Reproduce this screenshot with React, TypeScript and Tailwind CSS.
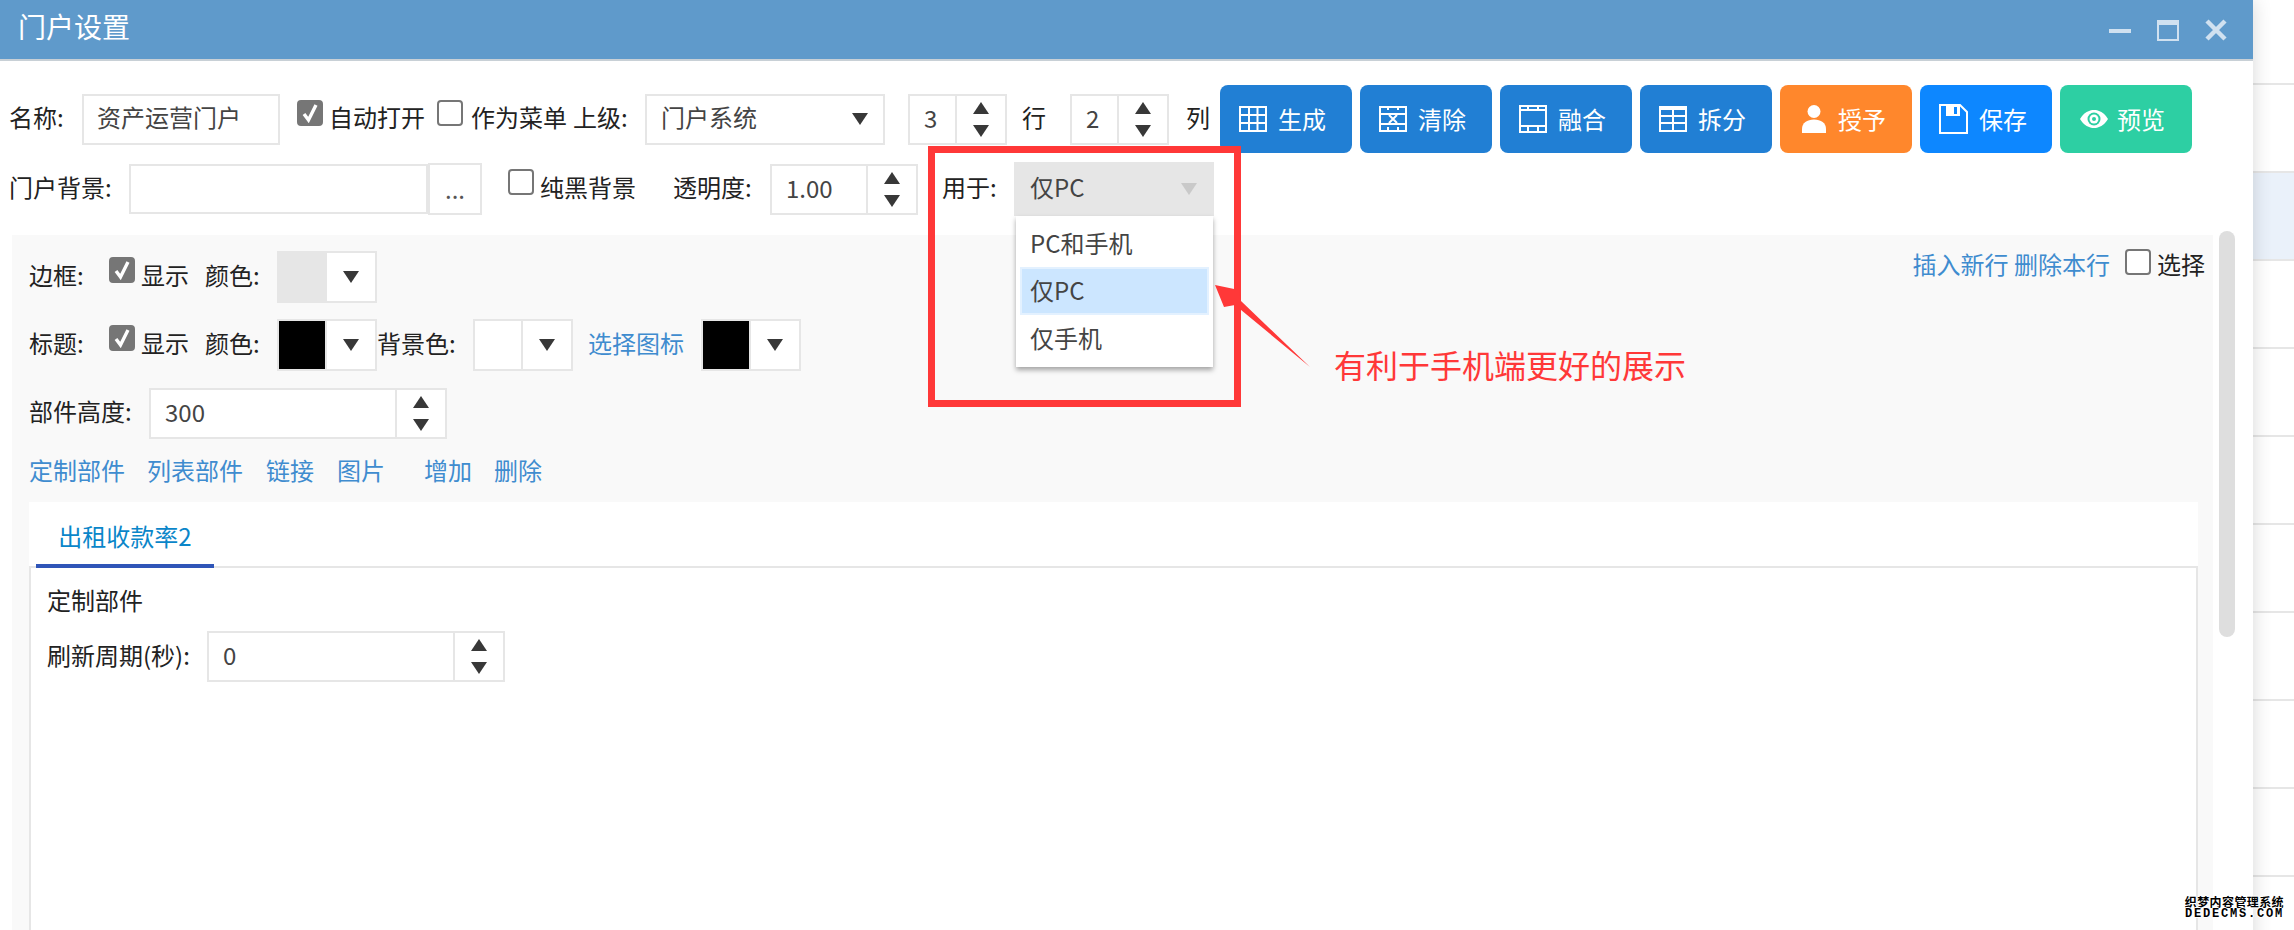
import type { ReactNode } from 'react';

const asideRows = [false, true, false, false, false, false, false, false, false, false];

function Triangle({ down, muted }: { down?: boolean; muted?: boolean }) {
  return (
    <svg width="16" height="12" viewBox="0 0 16 12" className="block shrink-0">
      <polygon
        points={down ? '0,0 16,0 8,12' : '8,0 16,12 0,12'}
        fill={muted ? '#c9c9c9' : '#383838'}
      />
    </svg>
  );
}

function Check({ checked }: { checked?: boolean }) {
  return (
    <div
      className={`flex h-[26px] w-[26px] shrink-0 items-center justify-center rounded-[4px] border-2 ${
        checked ? 'border-[#767676] bg-[#767676]' : 'border-[#767676] bg-white'
      }`}
    >
      {checked && (
        <svg width="18" height="20" viewBox="0 0 18 20">
          <path d="M3 11 L7.500 17 L15 2" fill="none" stroke="#fff" strokeWidth="3.400" />
        </svg>
      )}
    </div>
  );
}

function Spinner({ width, value }: { width: string; value: string }) {
  return (
    <div className={`flex h-[51px] shrink-0 border-2 border-[#e6e6e6] bg-white ${width}`}>
      <div className="flex min-w-0 flex-1 items-center pb-[3px] pl-[14px] text-[#444]">{value}</div>
      <div className="flex w-[50px] shrink-0 flex-col items-center justify-center gap-[11px] border-l-2 border-[#e6e6e6]">
        <Triangle />
        <Triangle down />
      </div>
    </div>
  );
}

function ColorPicker({ swatch }: { swatch: string }) {
  return (
    <div className="flex h-[52px] w-[100px] shrink-0 border-2 border-[#e6e6e6] bg-white">
      <div className={`w-[46px] ${swatch}`} />
      <div className="flex flex-1 items-center justify-center border-l-2 border-[#e6e6e6]">
        <Triangle down />
      </div>
    </div>
  );
}

function ToolButton({ label, icon, tone, inset, gap }: { label: string; icon: ReactNode; tone: string; inset: string; gap: string }) {
  return (
    <button className={`flex h-[68px] w-[132px] shrink-0 items-center rounded-[8px] text-white ${tone} ${inset} ${gap}`}>
      {icon}
      <div>{label}</div>
    </button>
  );
}

function GridIcon() {
  return (
    <svg width="28" height="26" viewBox="0 0 28 26" className="shrink-0">
      <path d="M1 1H27V25H1Z M10 1V25 M18.500 1V25 M1 9H27 M1 17H27" fill="none" stroke="#fff" strokeWidth="2" />
    </svg>
  );
}

function ClearIcon() {
  return (
    <svg width="28" height="26" viewBox="0 0 28 26" className="shrink-0">
      <path d="M1 1H27V25H1Z M1 8H27 M1 18H27 M9 1V4 M19 1V4 M9 21V25 M19 21V25" fill="none" stroke="#fff" strokeWidth="2" />
      <path d="M10 9L18 17 M18 9L10 17" fill="none" stroke="#fff" strokeWidth="2" />
    </svg>
  );
}

function FilmIcon() {
  return (
    <svg width="28" height="28" viewBox="0 0 28 28" className="shrink-0">
      <path d="M1 1H27V27H1Z M1 5H27 M1 21H27 M9 1V5 M19 1V5 M9 21V27 M19 21V27" fill="none" stroke="#fff" strokeWidth="2" />
    </svg>
  );
}

function SplitIcon() {
  return (
    <svg width="28" height="26" viewBox="0 0 28 26" className="shrink-0">
      <path d="M1 1H27V25H1Z M1 3H27 M1 10H27 M1 17H27 M14 3V25" fill="none" stroke="#fff" strokeWidth="2" />
    </svg>
  );
}

function UserIcon() {
  return (
    <svg width="24" height="28" viewBox="0 0 24 28" className="shrink-0">
      <circle cx="12" cy="6.500" r="6.500" fill="#fff" />
      <path d="M0 28V24C0 18 5 14.500 12 14.500S24 18 24 24V28Z" fill="#fff" />
    </svg>
  );
}

function SaveIcon() {
  return (
    <svg width="29" height="30" viewBox="0 0 29 30" className="shrink-0">
      <path d="M1 1H21L28 8V29H1Z" fill="none" stroke="#fff" strokeWidth="2" />
      <path d="M7 1H21V12H7Z" fill="#fff" />
      <path d="M15 3H18V10H15Z" fill="#0d87ff" />
    </svg>
  );
}

function EyeIcon() {
  return (
    <svg width="28" height="20" viewBox="0 0 28 20" className="shrink-0">
      <path d="M0 10C4 3.500 9 1 14 1S24 3.500 28 10C24 16.500 19 19 14 19S4 16.500 0 10Z" fill="#fff" />
      <circle cx="14" cy="10" r="6.500" fill="#2dcfa3" />
      <circle cx="14" cy="10" r="4.500" fill="#fff" />
      <circle cx="14" cy="10" r="2" fill="#2dcfa3" />
    </svg>
  );
}

export default function App() {
  return (
    <div className="relative flex h-[930px] w-[2294px] overflow-hidden bg-white font-['Noto_Sans_CJK_SC','Noto_Sans',sans-serif] text-[24px] font-normal leading-[34px] text-[#222] [&_span]:pb-[4px]">
      {/* Window */}
      <div className="relative z-10 flex h-[980px] w-[2253px] shrink-0 flex-col bg-white shadow-[0_0_18px_rgba(0,0,0,0.16)]">
        <header className="flex h-[61px] shrink-0 items-center justify-between border-b-2 border-[#c8d0d6] bg-[#5f9acb] pl-[18px] pr-[26px]">
          <div className="pb-[8px] text-[28px] text-white">门户设置</div>
          <div className="flex items-center gap-[26px]">
            <svg width="22" height="22" viewBox="0 0 22 22">
              <rect x="0" y="10" width="22" height="4" fill="#d0e1f0" />
            </svg>
            <svg width="22" height="22" viewBox="0 0 22 22">
              <path d="M1 3H21V21H1Z" fill="none" stroke="#d0e1f0" strokeWidth="2" />
              <rect x="0" y="1" width="22" height="5" fill="#d0e1f0" />
            </svg>
            <svg width="22" height="22" viewBox="0 0 22 22">
              <path d="M2 2L20 20 M20 2L2 20" fill="none" stroke="#d0e1f0" strokeWidth="4.500" />
            </svg>
          </div>
        </header>

        {/* First toolbar row */}
        <div className="mt-[24px] flex h-[68px] shrink-0 items-center pl-[9px]">
          <span className="w-[73px] shrink-0">名称:</span>
          <div className="flex h-[51px] w-[198px] shrink-0 items-center border-2 border-[#e6e6e6] pl-[13px] text-[#444]">
            <span>资产运营门户</span>
          </div>
          <div className="ml-[17px] flex h-[51px] shrink-0 items-start pt-[6px]"><Check checked /></div>
          <span className="ml-[6px] w-[95px] shrink-0 whitespace-nowrap">自动打开</span>
          <div className="ml-[13px] flex h-[51px] shrink-0 items-start pt-[6px]"><Check /></div>
          <span className="ml-[8px] w-[96px] shrink-0 whitespace-nowrap">作为菜单</span>
          <span className="ml-[6px] w-[72px] shrink-0 whitespace-nowrap">上级:</span>
          <div className="flex h-[51px] w-[240px] shrink-0 items-center justify-between border-2 border-[#e6e6e6] pl-[14px] pr-[15px] text-[#444]">
            <span>门户系统</span>
            <Triangle down />
          </div>
          <div className="ml-[23px] shrink-0"><Spinner width="w-[99px]" value="3" /></div>
          <span className="ml-[15px] w-[24px] shrink-0">行</span>
          <div className="ml-[24px] shrink-0"><Spinner width="w-[99px]" value="2" /></div>
          <span className="ml-[17px] w-[24px] shrink-0">列</span>
          <div className="ml-[10px] flex shrink-0 gap-[8px]">
            <ToolButton label="生成" icon={<GridIcon />} tone="bg-[#217fd4]" inset="pl-[19px]" gap="gap-[11px]" />
            <ToolButton label="清除" icon={<ClearIcon />} tone="bg-[#217fd4]" inset="pl-[19px]" gap="gap-[11px]" />
            <ToolButton label="融合" icon={<FilmIcon />} tone="bg-[#217fd4]" inset="pl-[19px]" gap="gap-[11px]" />
            <ToolButton label="拆分" icon={<SplitIcon />} tone="bg-[#217fd4]" inset="pl-[19px]" gap="gap-[11px]" />
            <ToolButton label="授予" icon={<UserIcon />} tone="bg-[#ff872c]" inset="pl-[22px]" gap="gap-[12px]" />
            <ToolButton label="保存" icon={<SaveIcon />} tone="bg-[#0d87ff]" inset="pl-[19px]" gap="gap-[11px]" />
            <ToolButton label="预览" icon={<EyeIcon />} tone="bg-[#2dcfa3]" inset="pl-[20px]" gap="gap-[9px]" />
          </div>
        </div>

        {/* Second toolbar row */}
        <div className="relative z-20 mt-[9px] flex h-[54px] shrink-0 items-center pl-[9px]">
          <span className="w-[120px] shrink-0">门户背景:</span>
          <div className="h-[50px] w-[299px] shrink-0 border-2 border-[#e6e6e6]" />
          <div className="flex h-[52px] w-[54px] shrink-0 items-center justify-center border-2 border-[#e6e6e6] text-[#555]">...</div>
          <div className="ml-[26px] flex h-[50px] shrink-0 items-start pt-[5px]"><Check /></div>
          <span className="ml-[6px] w-[94px] shrink-0 whitespace-nowrap">纯黑背景</span>
          <span className="ml-[39px] w-[97px] shrink-0 whitespace-nowrap">透明度:</span>
          <Spinner width="w-[148px]" value="1.00" />
          <span className="ml-[24px] w-[72px] shrink-0 whitespace-nowrap">用于:</span>
          <div className="relative flex h-[54px] w-[200px] shrink-0 items-center justify-between bg-[#e6e6e6] pl-[16px] pr-[17px] text-[#444]">
            <span>仅PC</span>
            <Triangle down muted />
            <ul className="absolute left-[2px] top-full z-30 flex h-[151px] w-[197px] flex-col bg-white px-[4px] pt-[8px] shadow-[0_3px_5px_rgba(0,0,0,0.35)]">
              <li className="flex h-[43px] items-center pb-[6px] pl-[10px]">PC和手机</li>
              <li className="flex h-[48px] items-center border-2 border-[#e3f1ff] bg-[#cce6ff] pb-[2px] pl-[8px]">仅PC</li>
              <li className="flex h-[46px] items-center pl-[10px]">仅手机</li>
            </ul>
          </div>
        </div>

        {/* Settings area */}
        <div className="mt-[19px] flex min-h-0 flex-1">
          <div className="ml-[12px] flex w-[2201px] shrink-0 flex-col bg-[#f9f9f9] pl-[17px] pr-[15px] pt-[16px]">
            <div className="flex h-[52px] shrink-0 items-center justify-between">
              <div className="flex items-center">
                <span className="w-[80px] shrink-0">边框:</span>
                <div className="flex h-[52px] items-start pt-[6px]"><Check checked /></div>
                <span className="ml-[6px] w-[64px] shrink-0">显示</span>
                <span className="w-[72px] shrink-0">颜色:</span>
                <ColorPicker swatch="bg-[#e6e6e6]" />
              </div>
              <div className="mr-[-7px] -mt-[5px] flex items-start self-start">
                <span className="mt-[1px] whitespace-nowrap text-[#3f8ccf]">插入新行 删除本行</span>
                <div className="ml-[15px] mt-[3px]"><Check /></div>
                <span className="ml-[6px] mt-[1px] whitespace-nowrap">选择</span>
              </div>
            </div>
            <div className="mt-[16px] flex h-[52px] shrink-0 items-center">
              <span className="w-[80px] shrink-0">标题:</span>
              <div className="flex h-[52px] items-start pt-[6px]"><Check checked /></div>
              <span className="ml-[6px] w-[64px] shrink-0">显示</span>
              <span className="w-[72px] shrink-0">颜色:</span>
              <ColorPicker swatch="bg-black" />
              <span className="w-[96px] shrink-0">背景色:</span>
              <ColorPicker swatch="bg-white" />
              <span className="ml-[15px] w-[98px] shrink-0 text-[#3f8ccf]">选择图标</span>
              <div className="ml-[15px]"><ColorPicker swatch="bg-black" /></div>
            </div>
            <div className="mt-[16px] flex h-[52px] shrink-0 items-center">
              <span className="w-[120px] shrink-0">部件高度:</span>
              <Spinner width="w-[298px]" value="300" />
            </div>
            <div className="mt-[13px] flex h-[40px] shrink-0 items-center text-[#3f8ccf]">
              <span className="w-[118px] shrink-0">定制部件</span>
              <span className="w-[119px] shrink-0">列表部件</span>
              <span className="w-[71px] shrink-0">链接</span>
              <span className="w-[87px] shrink-0">图片</span>
              <span className="w-[70px] shrink-0">增加</span>
              <span className="shrink-0">删除</span>
            </div>

            {/* Widget tabs */}
            <div className="mt-[10px] flex min-h-0 flex-1 flex-col bg-white">
              <div className="relative z-10 h-[64px] shrink-0">
                <div className="ml-[7px] flex h-[66px] w-[178px] items-center justify-center border-b-4 border-[#2f55b8] pt-[6px] text-[#0a86c9]">
                  出租收款率2
                </div>
              </div>
              <div className="flex-1 border-2 border-[#e6e6e6] pl-[16px] pt-[15px]">
                <div className="h-[34px]">定制部件</div>
                <div className="mt-[14px] flex items-center">
                  <span className="w-[160px] shrink-0 whitespace-nowrap">刷新周期(秒):</span>
                  <Spinner width="w-[298px]" value="0" />
                </div>
              </div>
            </div>
          </div>
          <div className="ml-[6px] -mt-[4px] h-[406px] w-[16px] shrink-0 rounded-full bg-[#dedede]" />
        </div>
      </div>

      {/* Page behind the window */}
      <aside className="flex-1 pt-[83px]">
        {asideRows.map((tinted, i) => (
          <div key={i} className={`h-[88px] border-t-2 border-[#e6e6e6] ${tinted ? 'bg-[#eaf1fa]' : ''}`} />
        ))}
      </aside>

      {/* Annotation */}
      <div className="pointer-events-none absolute left-[928px] top-[146px] z-40 h-[261px] w-[313px] border-[7px] border-[#ff3838]" />
      <svg className="pointer-events-none absolute inset-0 z-40" width="2294" height="930" viewBox="0 0 2294 930">
        <polygon points="1215,285 1239,290 1241,301 1310,367 1235,305 1224,307" fill="#ff3838" />
      </svg>
      <div className="absolute left-[1334px] top-[341px] z-40 whitespace-nowrap text-[32px] leading-[46px] text-[#ff3838]">有利于手机端更好的展示</div>

      {/* Watermark */}
      <div className="absolute bottom-[9px] right-[10px] z-40 flex flex-col items-center text-[12px] font-bold leading-[13px] text-black [text-shadow:1px_0_0_#fff,-1px_0_0_#fff,0_1px_0_#fff,0_-1px_0_#fff]">
        <div className="whitespace-nowrap tracking-[0.4px]">织梦内容管理系统</div>
        <div className="whitespace-nowrap font-['Liberation_Mono',monospace] tracking-[1.800px]">DEDECMS.COM</div>
      </div>
    </div>
  );
}
